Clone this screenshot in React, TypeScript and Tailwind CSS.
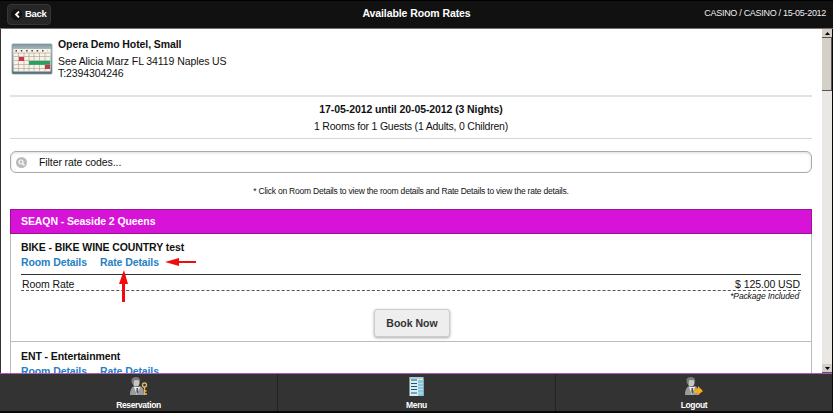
import React from "react";

function CalendarIcon() {
  return (
    <svg width="42" height="32" viewBox="0 0 42 32" className="block shrink-0">
      <defs>
        <linearGradient id="cal" x1="0" y1="0" x2="0" y2="1">
          <stop offset="0" stopColor="#7b929b" />
          <stop offset=".2" stopColor="#b3c0c4" />
          <stop offset="1" stopColor="#526b75" />
        </linearGradient>
      </defs>
      <rect x="1" y="1" width="40" height="30" rx="1" fill="url(#cal)" stroke="#8399a1" strokeWidth=".8" />
      <rect x="2.500" y="6" width="37" height="22.500" fill="#f8f2e8" />
      <path d="M4.500 7.800h32" stroke="#444" strokeWidth="1.500" strokeDasharray="1.500 3.800" />
      <path d="M2.500 10H39M2.500 13.500H39M2.500 17.500H39M2.500 21.500H39M2.500 25.500H39M7.500 10V28M13 10V28M18 10V28M23 10V28M28.500 10V28M34 10V28" stroke="#b5a89b" strokeWidth=".7" />
      <rect x="8" y="14" width="5" height="4" fill="#d32f45" />
      <rect x="18" y="18" width="21" height="3.800" fill="#25a160" />
      <rect x="34" y="22" width="5" height="4" fill="#d32f45" />
    </svg>
  );
}

function Person() {
  return (
    <>
      <path d="M0 18Q0 11 4 9L7 10L10 9Q14 10 14 18Z" fill="#9a9c9c" />
      <path d="M4 10L7 18L10 10Z" fill="#eee" />
      <path d="M6.500 11h1.500l.5 4-1.200 2-1-2Z" fill="#555" />
      <ellipse cx="6.200" cy="5" rx="3.400" ry="4.500" fill="#c6c6c3" />
      <path d="M1.800 6Q0 0 6 0Q11 0 10 6L8.500 3L4 3.200L3.500 8Z" fill="#777a79" />
    </>
  );
}

function ReservationIcon() {
  return (
    <svg width="18" height="19" viewBox="0 0 18 19">
      <Person />
      <circle cx="14.500" cy="8" r="2" fill="none" stroke="#e8b957" strokeWidth="1.300" />
      <path d="M14.500 10V18M14.500 14h2M14.500 17h2.500" stroke="#e8b957" strokeWidth="1.300" fill="none" />
    </svg>
  );
}

function MenuIcon() {
  return (
    <svg width="15" height="19" viewBox="0 0 15 19">
      <rect x=".5" width="14" height="19" fill="#d4edf7" />
      <rect x="9" y="3" width="5.500" height="16" fill="#8dc5df" />
      <path d="M2 3H8M2 6.500H8M2 9.500H8M2 12.500H8M2 16H8" stroke="#28556b" strokeWidth="1.200" />
      <path d="M1 1H14" stroke="#87aebe" />
      <path d="M9 6.500h5M9 9.500h5M9 12.500h5M9 16h5" stroke="#bbdfed" />
    </svg>
  );
}

function LogoutIcon() {
  return (
    <svg width="18" height="19" viewBox="0 0 18 19">
      <Person />
      <path d="M9 12H13V9L18 14L13 18V16H9Z" fill="#f5ad19" />
    </svg>
  );
}

function Links() {
  return (
    <div className="flex h-[14px] gap-[13px] whitespace-nowrap font-bold leading-[14px] tracking-[-0.1px] text-[#267fc4]">
      <a className="w-[66px]">Room Details</a>
      <a>Rate Details</a>
    </div>
  );
}

function Tab({ icon, label, className }: { icon: React.ReactNode; label: string; className: string }) {
  return (
    <div className={`flex flex-col items-center pt-[3px] text-[8.5px] font-bold leading-[11px] tracking-[-0.36px] text-white ${className}`}>
      {icon}
      <span className="mt-[4px]">{label}</span>
    </div>
  );
}

export default function App() {
  return (
    <div className="relative flex h-[413px] w-[833px] flex-col overflow-hidden bg-[#080808] font-['Liberation_Sans',Arial,sans-serif] text-[10.5px] tracking-[-0.09px] text-[#111]">
      <header className="grid h-[29px] shrink-0 grid-cols-[1fr_auto_1fr] items-center border-b border-t border-b-[#77716f] border-t-black bg-[#111] pl-[7px] pr-[7px] text-white">
        <button className="flex h-[21px] w-[44px] items-center gap-[3px] rounded-[4px] border border-[#363636] bg-[#262626] pl-[3px] text-[9.5px] font-bold tracking-[-0.3px]">
          <span className="flex size-[11px] shrink-0 items-center justify-center rounded-full bg-[#111]">
            <svg width="6" height="7" viewBox="0 0 6 7"><path d="M5 .5L2 3.500L5 6.500" fill="none" stroke="#fff" strokeWidth="1.800" /></svg>
          </span>
          Back
        </button>
        <h1 className="-mt-[3px] font-bold leading-[14px]">Available Room Rates</h1>
        <span className="-mt-[3px] justify-self-end text-[9px] leading-[13px] tracking-[-0.3px] text-[#eee]">CASINO / CASINO / 15-05-2012</span>
      </header>

      <div className="mr-px flex h-[344px] shrink-0 border-l border-[#333] bg-white">
        <main className="h-[344px] min-w-0 flex-1 overflow-hidden pl-[9px] pr-[10px]">
          <section className="flex h-[68px] border-b-2 border-[#e2e2e2] pl-[1px] pt-[14px]">
            <CalendarIcon />
            <div className="-mt-[6px] ml-[5px] leading-[12px]">
              <h2 className="mb-[4px] font-bold leading-[14px]">Opera Demo Hotel, Small</h2>
              <p>See Alicia Marz FL 34119 Naples US</p>
              <p>T:2394304246</p>
            </div>
          </section>
          <section className="h-[42px] border-b border-[#d5d5d5] pt-[4px] text-center leading-[17px]">
            <p className="font-bold">17-05-2012 until 20-05-2012 (3 Nights)</p>
            <p className="tracking-[-0.21px]">1 Rooms for 1 Guests (1 Adults, 0 Children)</p>
          </section>
          <div className="mt-[12px] flex h-[22px] items-center rounded-[6px] border border-[#aaa] pl-[5px] shadow-[inset_0_1px_3px_#ddd]">
            <svg width="11" height="11" viewBox="0 0 11 11"><circle cx="5.500" cy="5.500" r="5.500" fill="#bbb" /><circle cx="5" cy="5" r="2" fill="none" stroke="#fff" strokeWidth="1.200" /><path d="M6.500 6.500L8.500 8.500" stroke="#fff" strokeWidth="1.300" /></svg>
            <span className="ml-[12px] pt-px">Filter rate codes...</span>
          </div>
          <p className="mt-[11px] h-[25px] text-center text-[8.5px] leading-[14px] tracking-[-0.22px]">* Click on Room Details to view the room details and Rate Details to view the rate details.</p>
          <section className="border-x border-[#bbb]">
            <h2 className="-mx-px h-[25px] border border-[#941594] bg-[#d813d8] pl-[10px] font-bold leading-[23px] text-white">SEAQN - Seaside 2 Queens</h2>
            <article className="h-[108px] border-b border-[#bbb] px-[10px] pt-[6px]">
              <h3 className="font-bold leading-[15px]">BIKE - BIKE WINE COUNTRY test</h3>
              <Links />
              <div className="mt-[5px] border-t border-[#333] pt-[2px]">
                <div className="flex h-[14px] justify-between border-b border-dashed border-[#555] px-[1px] leading-[14px]"><span>Room Rate</span><span>$ 125.00 USD</span></div>
              </div>
              <p className="pr-[2px] text-right text-[8.5px] italic leading-[11px] tracking-[-0.12px]">*Package Included</p>
              <button className="relative left-px mx-auto mt-[7px] block h-[28px] w-[76px] rounded-[3px] border border-[#ccc] bg-[#eee] font-bold leading-[26px] tracking-normal text-[#333] shadow-[0_1px_3px_#aaa]">Book Now</button>
            </article>
            <article className="h-[40px] px-[10px] pt-[7px]">
              <h3 className="font-bold leading-[15px]">ENT - Entertainment</h3>
              <Links />
            </article>
          </section>
        </main>
        <aside className="flex w-[10px] shrink-0 flex-col bg-[#e9e8e4]">
          <div className="flex h-[9px] items-center justify-center border-b border-[#555] bg-[#d4d0c8]"><svg width="5" height="3"><path d="M0 3L2.500 0L5 3Z" fill="#000" /></svg></div>
          <div className="h-[53px] border-b border-r border-[#555] bg-[#d4d0c8]" />
          <div className="mt-auto flex h-[9px] items-center justify-center border-b border-[#555] bg-[#d4d0c8]"><svg width="5" height="3"><path d="M0 0L2.500 3L5 0Z" fill="#000" /></svg></div>
        </aside>
      </div>

      <footer className="mr-px flex h-[38px] shrink-0 border-t border-[#b455c0] bg-[#333]">
        <Tab className="w-[278px] border-r border-[#222]" icon={<ReservationIcon />} label="Reservation" />
        <Tab className="w-[278px] border-r border-[#222]" icon={<MenuIcon />} label="Menu" />
        <Tab className="w-[276px]" icon={<LogoutIcon />} label="Logout" />
      </footer>

      <svg className="absolute left-[165px] top-[257px]" width="32" height="10" viewBox="0 0 32 10"><path d="M0 5L14 1V4H31V6H14V9Z" fill="#f00c0c" /></svg>
      <svg className="absolute left-[119px] top-[270px]" width="10" height="32" viewBox="0 0 10 32"><path d="M5 0L9 14H6V32H3V14H0Z" fill="#f00c0c" /></svg>
    </div>
  );
}
